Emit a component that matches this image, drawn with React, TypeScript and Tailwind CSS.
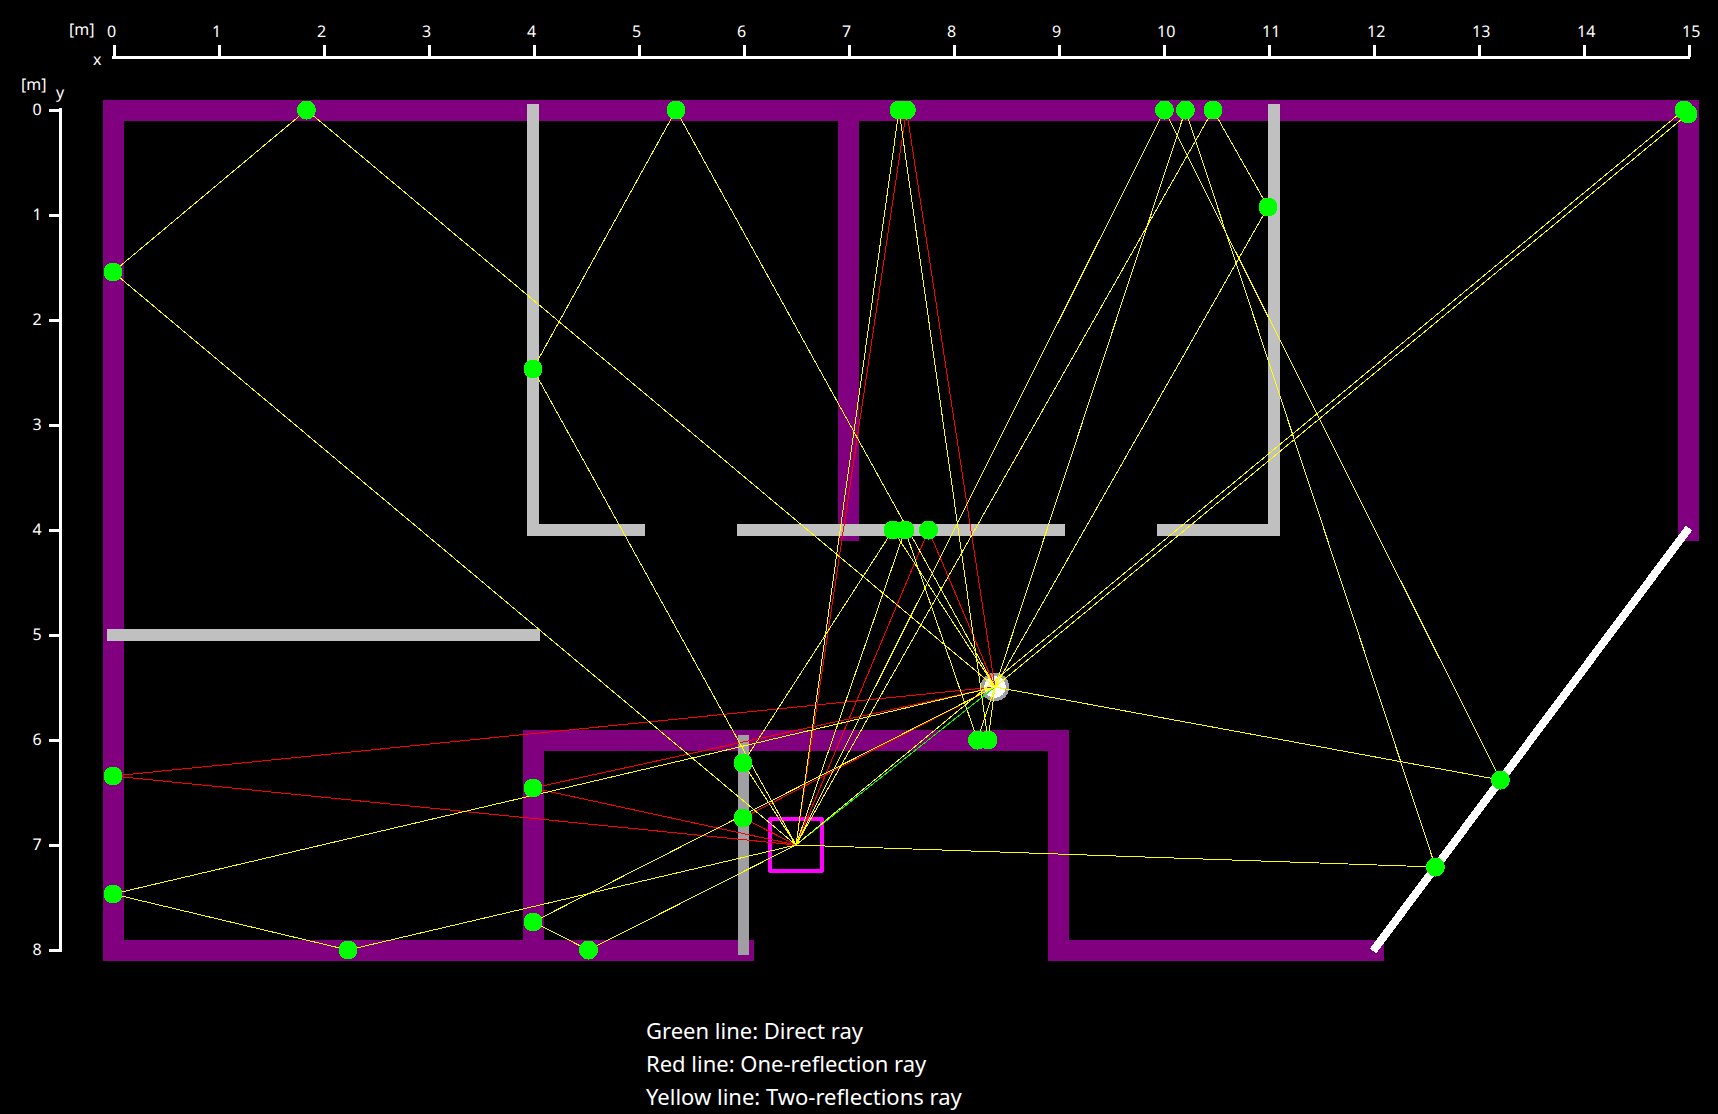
const TX: Pt = [995, 687];
const RX: Pt = [796, 845];

type Pt = [number, number];

// one-reflection points (red)
const oneBounce: Pt[] = [
  [906.5, 110],
  [928.5, 530],
  [113, 776],
  [533, 788],
  [743, 818],
];

// two-reflection paths: tx -> first -> second -> rx (yellow)
const twoBounce: [Pt, Pt][] = [
  [[306.5, 110], [113, 272]],
  [[676, 110], [533, 369]],
  [[988, 740], [899, 110]],
  [[1500.5, 780], [1164.5, 110]],
  [[1185.5, 110], [1435.5, 867]],
  [[1268, 207], [1213, 110]],
  [[1688, 114], [1684, 110]],
  [[113, 894], [348, 950]],
  [[533, 922], [588.5, 950]],
  [[893, 530], [743, 763]],
  [[977.5, 740], [905, 530]],
];

const purpleWalls = [
  [103, 100, 1596, 21],
  [103, 100, 21, 861],
  [103, 940, 651, 21],
  [1678, 100, 21, 441],
  [838, 100, 21, 441],
  [523, 730, 21, 231],
  [523, 730, 546, 21],
  [1048, 730, 21, 231],
  [1048, 940, 336, 21],
];

const greyWalls = [
  [527, 104, 12, 432],
  [527, 524, 118, 12],
  [737, 524, 328, 12],
  [1157, 524, 118, 12],
  [1268, 104, 12, 432],
  [107, 629, 433, 12],
];

const xTicks = Array.from({ length: 16 }, (_, i) => i);
const yTicks = Array.from({ length: 9 }, (_, i) => i);

function Ray({ a, b, color }: { a: Pt; b: Pt; color: string }) {
  return <line x1={a[0]} y1={a[1]} x2={b[0]} y2={b[1]} stroke={color} strokeWidth={1} />;
}

function FloorPlan() {
  return (
    <svg width={1718} height={1014} className="block shrink-0" shapeRendering="crispEdges">
      {/* axes */}
      <g fill="#ffffff">
        <rect x={112} y={56} width={1578} height={3} />
        {xTicks.map((t) => (
          <rect key={t} x={112.5 + t * 105} y={45} width={3} height={12} />
        ))}
        <rect x={59} y={108} width={3} height={844} />
        {yTicks.map((t) => (
          <rect key={t} x={49} y={108.5 + t * 105} width={11} height={3} />
        ))}
      </g>
      <g fill="#ffffff" fontSize={16} fontFamily='"Noto Sans", sans-serif' textRendering="geometricPrecision">
        {xTicks.map((t) => (
          <text key={t} x={107 + t * 105} y={37}>{t}</text>
        ))}
        {yTicks.map((t) => (
          <text key={t} x={37} y={115 + t * 105} textAnchor="middle">{t}</text>
        ))}
        <text x={69} y={35}>[m]</text>
        <text x={93} y={65}>x</text>
        <text x={21} y={90}>[m]</text>
        <text x={56} y={98}>y</text>
      </g>

      {/* walls */}
      {purpleWalls.map(([x, y, w, h], i) => (
        <rect key={i} x={x} y={y} width={w} height={h} fill="#800080" />
      ))}
      {greyWalls.map(([x, y, w, h], i) => (
        <rect key={i} x={x} y={y} width={w} height={h} fill="#c0c0c0" />
      ))}
      <rect x={738} y={735} width={11} height={220} fill="#a0a0a4" />
      <line x1={1373} y1={951} x2={1689} y2={528} stroke="#ffffff" strokeWidth={8} />

      {/* tx and rx */}
      <circle cx={TX[0]} cy={TX[1]} r={12.5} fill="#ffffff" stroke="#a0a0a4" strokeWidth={3.5} />
      <rect x={770} y={819} width={52} height={52} rx={1} fill="none" stroke="#ff00ff" strokeWidth={4} />

      {/* rays */}
      <Ray a={TX} b={RX} color="#00ff00" />
      {oneBounce.map((p, i) => (
        <g key={i}>
          <Ray a={TX} b={p} color="#ff0000" />
          <Ray a={p} b={RX} color="#ff0000" />
        </g>
      ))}
      {twoBounce.map(([p, q], i) => (
        <g key={i}>
          <Ray a={TX} b={p} color="#ffff00" />
          <Ray a={p} b={q} color="#ffff00" />
          <Ray a={q} b={RX} color="#ffff00" />
        </g>
      ))}

      {/* reflection points */}
      <g fill="#00ff00">
        {oneBounce.concat(twoBounce.flat()).map((p, i) => (
          <circle key={i} cx={p[0]} cy={p[1]} r={9.5} />
        ))}
      </g>
    </svg>
  );
}

export default function App() {
  return (
    <div className="flex flex-col h-[1114px] bg-black overflow-hidden">
      <FloorPlan />
      <div className="pl-[646px] text-white text-[22px] leading-[33px] font-['Noto_Sans',sans-serif]">
        <p>Green line: Direct ray</p>
        <p>Red line: One-reflection ray</p>
        <p>Yellow line: Two-reflections ray</p>
      </div>
    </div>
  );
}
